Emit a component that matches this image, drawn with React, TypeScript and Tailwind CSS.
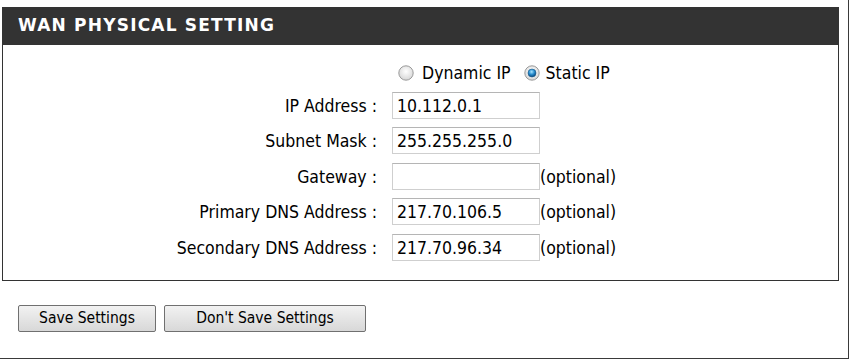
import React from "react";

const body = { fontFamily: '"DejaVu Sans Condensed", "DejaVu Sans", sans-serif' };
const title = { fontFamily: '"DejaVu Sans", Verdana, sans-serif' };

function Radio({ checked }: { checked: boolean }) {
  return (
    <svg width="16" height="16" viewBox="0 0 16 16" className="shrink-0">
      <defs>
        <radialGradient id="off" cx="50%" cy="40%" r="60%">
          <stop offset="0%" stopColor="#ffffff" />
          <stop offset="100%" stopColor="#d6d6d6" />
        </radialGradient>
        <radialGradient id="on" cx="45%" cy="35%" r="60%">
          <stop offset="0%" stopColor="#a8e4ff" />
          <stop offset="55%" stopColor="#2a8fd0" />
          <stop offset="100%" stopColor="#0c4f86" />
        </radialGradient>
      </defs>
      <circle cx="8" cy="8" r="7.2" fill="url(#off)" stroke="#9a9a9a" strokeWidth="1" />
      {checked && <circle cx="8" cy="8" r="4" fill="url(#on)" stroke="#1f5f8f" strokeWidth="0.6" />}
    </svg>
  );
}

function Field({ label, value, optional }: { label: string; value: string; optional?: boolean }) {
  return (
    <>
      <div className="h-[27px] text-right pr-[15px] pt-[1px] leading-[27px] whitespace-nowrap">{label}</div>
      <div className="flex items-center h-[27px]">
        <div className="w-[148px] h-[27px] border border-[#cfcfcf] border-t-[#b5b5b5] bg-white pl-[4px] pt-[1px] leading-[25px]">
          {value}
        </div>
        {optional && <span className="h-[27px] leading-[27px] pt-[1px]">(optional)</span>}
      </div>
    </>
  );
}

export default function App() {
  return (
    <div className="w-[849px] h-[359px] bg-white border-r border-b border-[#3a3a3a] text-black" style={body}>
      <div className="ml-[2px] pt-[7px] w-[837px]">
        <div
          className="h-[38px] bg-[#333333] text-white font-bold text-[17px] tracking-[1.2px] pl-[16px] flex items-center"
          style={title}
        >
          WAN PHYSICAL SETTING
        </div>
        <div className="h-[236px] border-l border-r border-b border-[#333333] text-[17.5px]">
          <div className="grid grid-cols-[389px_auto] gap-y-[8.5px] pt-[18px]">
            <div />
            <div className="flex items-center h-[20px] ml-[6px]">
              <Radio checked={false} />
              <span className="ml-[8px]">Dynamic IP</span>
              <span className="ml-[13px]">
                <Radio checked={true} />
              </span>
              <span className="ml-[6px]">Static IP</span>
            </div>
            <Field label="IP Address :" value="10.112.0.1" />
            <Field label="Subnet Mask :" value="255.255.255.0" />
            <Field label="Gateway :" value="" optional />
            <Field label="Primary DNS Address :" value="217.70.106.5" optional />
            <Field label="Secondary DNS Address :" value="217.70.96.34" optional />
          </div>
        </div>
        <div className="flex gap-[8px] pl-[16px] pt-[24px]">
          <button className="w-[138px] h-[27px] rounded-[2px] border border-[#707070] bg-gradient-to-b from-[#f2f2f2] to-[#d8d8d8] text-[15.5px] leading-none">
            Save Settings
          </button>
          <button className="w-[202px] h-[27px] rounded-[2px] border border-[#707070] bg-gradient-to-b from-[#f2f2f2] to-[#d8d8d8] text-[15.5px] leading-none">
            Don't Save Settings
          </button>
        </div>
      </div>
    </div>
  );
}
